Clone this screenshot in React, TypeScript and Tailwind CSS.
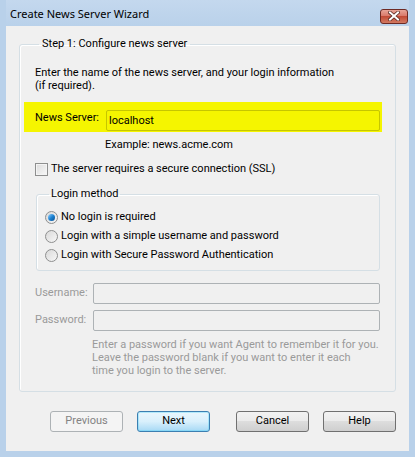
import React from 'react';

const font = "font-['Roboto',Arial,sans-serif]";

const Radio: React.FC<{ checked?: boolean; label: string }> = ({ checked, label }) => (
  <div className="flex items-center h-[19px]">
    <span className="w-[13px] h-[13px] rounded-full border border-[#8e8f8f] bg-gradient-to-br from-[#d9d9d9] to-[#f7f7f7] flex items-center justify-center">
      {checked && <span className="w-[7px] h-[7px] rounded-full bg-gradient-to-br from-[#8ad1ff] via-[#1c83d2] to-[#0a4f93]" />}
    </span>
    <span className="ml-[3px]">{label}</span>
  </div>
);

const Button: React.FC<{ label: string; disabled?: boolean; primary?: boolean }> = ({ label, disabled, primary }) => {
  if (disabled) {
    return (
      <button className="w-[73px] h-[21px] rounded-[3px] border border-[#adb2b5] bg-[#f4f4f4] text-[#838383]">
        {label}
      </button>
    );
  }
  return (
    <button
      className={
        primary
          ? 'w-[73px] h-[21px] rounded-[3px] border border-[#3c7fb1] bg-gradient-to-b from-[#eaf6fd] via-[#d9f0fc] to-[#a7d9f5] text-black shadow-[inset_0_0_0_1px_#48d2fa55]'
          : 'w-[73px] h-[21px] rounded-[3px] border border-[#707070] bg-[linear-gradient(#f2f2f2,#ebebeb_45%,#dddddd_50%,#cfcfcf)] text-black'
      }
    >
      {label}
    </button>
  );
};

const App: React.FC = () => {
  return (
    <div className={`w-[415px] h-[457px] bg-[#b9d1ea] flex flex-col px-[6px] pb-[6px] text-[11px] text-black ${font}`}>
      {/* title bar */}
      <div className="h-[26px] flex items-center justify-between pl-[4px] pr-[1px] bg-gradient-to-b from-[#c4d8ee] to-[#b9d1ea]">
        <span className="text-[11px] text-black font-['Noto_Sans',sans-serif] mt-[2px]">Create News Server Wizard</span>
        <div className="w-[28px] h-[15px] mt-[6px] rounded-[3px] border border-[#6d2a24] bg-[linear-gradient(#e8a497,#d9796a_45%,#c24b36_50%,#d27a62)] flex items-center justify-center">
          <svg width="12" height="10" viewBox="0 0 12 10">
            <path d="M2 1.5 L10 8.5 M10 1.5 L2 8.5" stroke="#5a2a24" strokeWidth="3.6" strokeLinecap="square" />
            <path d="M2 1.5 L10 8.5 M10 1.5 L2 8.5" stroke="#ffffff" strokeWidth="2" strokeLinecap="square" />
          </svg>
        </div>
      </div>

      {/* client area */}
      <div className="flex-1 bg-[#f0f0f0] flex flex-col px-[13px] pt-[9px]">
        <fieldset className="border border-[#d5dfe5] rounded-[3px] h-[357px] pl-[15px] pr-[15px] shadow-[inset_1px_1px_0_#fff]">
          <legend className="ml-[4px] px-[3px] leading-[18px] text-[11px]">Step 1: Configure news server</legend>

          <p className="mt-[13px] leading-[13px]">
            Enter the name of the news server, and your login information
            <br />
            (if required).
          </p>

          <div className="mt-[10px] -ml-[11px] -mr-[2px] h-[30px] bg-[#f5f500] flex items-end pl-[11px] pr-[2px] pb-[1px]">
            <span className="w-[71px] pb-[5px]">News Server:</span>
            <input
              className="flex-1 h-[21px] border border-[#c6c600] rounded-[2px] bg-[#f5f500] px-[2px] outline-none"
              defaultValue="localhost"
            />
          </div>

          <div className="mt-[6px] pl-[70px] h-[13px] leading-[13px]">Example: news.acme.com</div>

          <label className="mt-[11px] flex items-center h-[14px]">
            <span className="w-[13px] h-[13px] border border-[#8e8f8f] bg-gradient-to-br from-[#dcdcdc] to-[#f8f8f8] shadow-[inset_0_0_0_1px_#f4f4f4]" />
            <span className="ml-[3px]">The server requires a secure connection (SSL)</span>
          </label>

          <fieldset className="mt-[11px] ml-[1px] border border-[#d5dfe5] rounded-[3px] h-[84px] pl-[8px] shadow-[inset_1px_1px_0_#fff]">
            <legend className="ml-[4px] px-[2px] leading-[14px]">Login method</legend>
            <div className="mt-[7px] flex flex-col">
              <Radio checked label="No login is required" />
              <Radio label="Login with a simple username and password" />
              <Radio label="Login with Secure Password Authentication" />
            </div>
          </fieldset>

          <div className="mt-[12px] flex items-center text-[#9a9a9a]">
            <span className="w-[58px]">Username:</span>
            <div className="flex-1 h-[21px] border border-[#adb2b5] rounded-[2px] bg-[#f0f0f0]" />
          </div>
          <div className="mt-[6px] flex items-center text-[#9a9a9a]">
            <span className="w-[58px]">Password:</span>
            <div className="flex-1 h-[21px] border border-[#adb2b5] rounded-[2px] bg-[#f0f0f0]" />
          </div>
          <p className="mt-[7px] ml-[57px] leading-[13px] text-[#9a9a9a]">
            Enter a password if you want Agent to remember it for you.
            <br />
            Leave the password blank if you want to enter it each
            <br />
            time you login to the server.
          </p>
        </fieldset>

        <div className="mt-[19px] flex items-center justify-end">
          <Button label="Previous" disabled />
          <div className="ml-[14px]">
            <Button label="Next" primary />
          </div>
          <div className="ml-[26px]">
            <Button label="Cancel" />
          </div>
          <div className="ml-[14px]">
            <Button label="Help" />
          </div>
        </div>
      </div>
    </div>
  );
};

export default App;
